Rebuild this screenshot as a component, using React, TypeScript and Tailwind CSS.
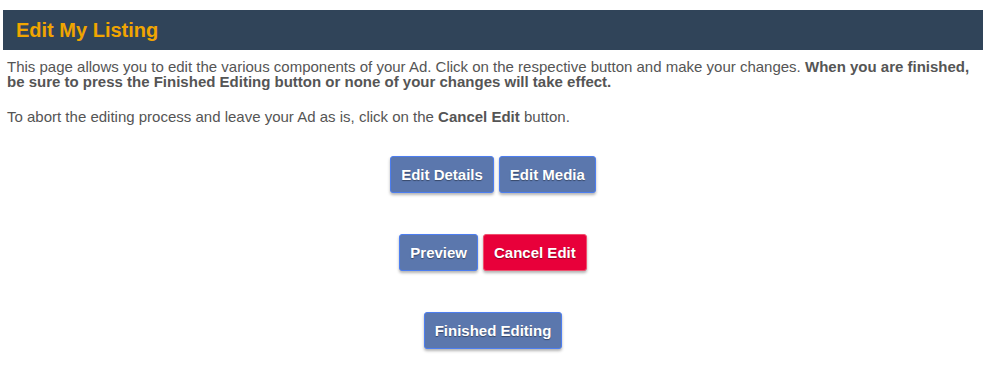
function Btn({ label, red }: { label: string; red?: boolean }) {
  return (
    <button
      className={
        red
          ? "h-[37px] px-[10px] pt-[1px] rounded-[3px] border border-[#f0506e] bg-[#e8003a] text-white text-[15px] font-bold shadow-[0_2px_3px_rgba(0,0,0,0.3)] [text-shadow:0_1px_1px_rgba(0,0,0,0.4)]"
          : "h-[37px] px-[10px] pt-[1px] rounded-[3px] border border-[#4d7ef0] bg-[#5b77ad] text-white text-[15px] font-bold shadow-[0_2px_3px_rgba(0,0,0,0.3)] [text-shadow:0_1px_1px_rgba(0,0,0,0.4)]"
      }
    >
      {label}
    </button>
  );
}

export default function App() {
  return (
    <div className="w-[992px] h-[368px] bg-white [font-family:'Liberation_Sans',Arial,sans-serif] pt-[10px]">
      <div className="ml-[3px] w-[980px]">
        <div className="h-[40px] bg-[#304459] flex items-center pl-[13px]">
          <h1 className="text-[20px] font-bold text-[#f0a500]">Edit My Listing</h1>
        </div>
        <div className="px-[4px] text-[15px] leading-[15px] text-[#555]">
          <p className="mt-[9px]">
            This page allows you to edit the various components of your Ad. Click on the respective button and make your changes.{" "}
            <b>When you are finished, be sure to press the Finished Editing button or none of your changes will take effect.</b>
          </p>
          <p className="mt-[20px]">
            To abort the editing process and leave your Ad as is, click on the <b>Cancel Edit</b> button.
          </p>
        </div>
        <div className="flex flex-col items-center gap-[41px] mt-[32px]">
          <div className="flex gap-[5px]">
            <Btn label="Edit Details" />
            <Btn label="Edit Media" />
          </div>
          <div className="flex gap-[5px]">
            <Btn label="Preview" />
            <Btn label="Cancel Edit" red />
          </div>
          <div className="flex">
            <Btn label="Finished Editing" />
          </div>
        </div>
      </div>
    </div>
  );
}
